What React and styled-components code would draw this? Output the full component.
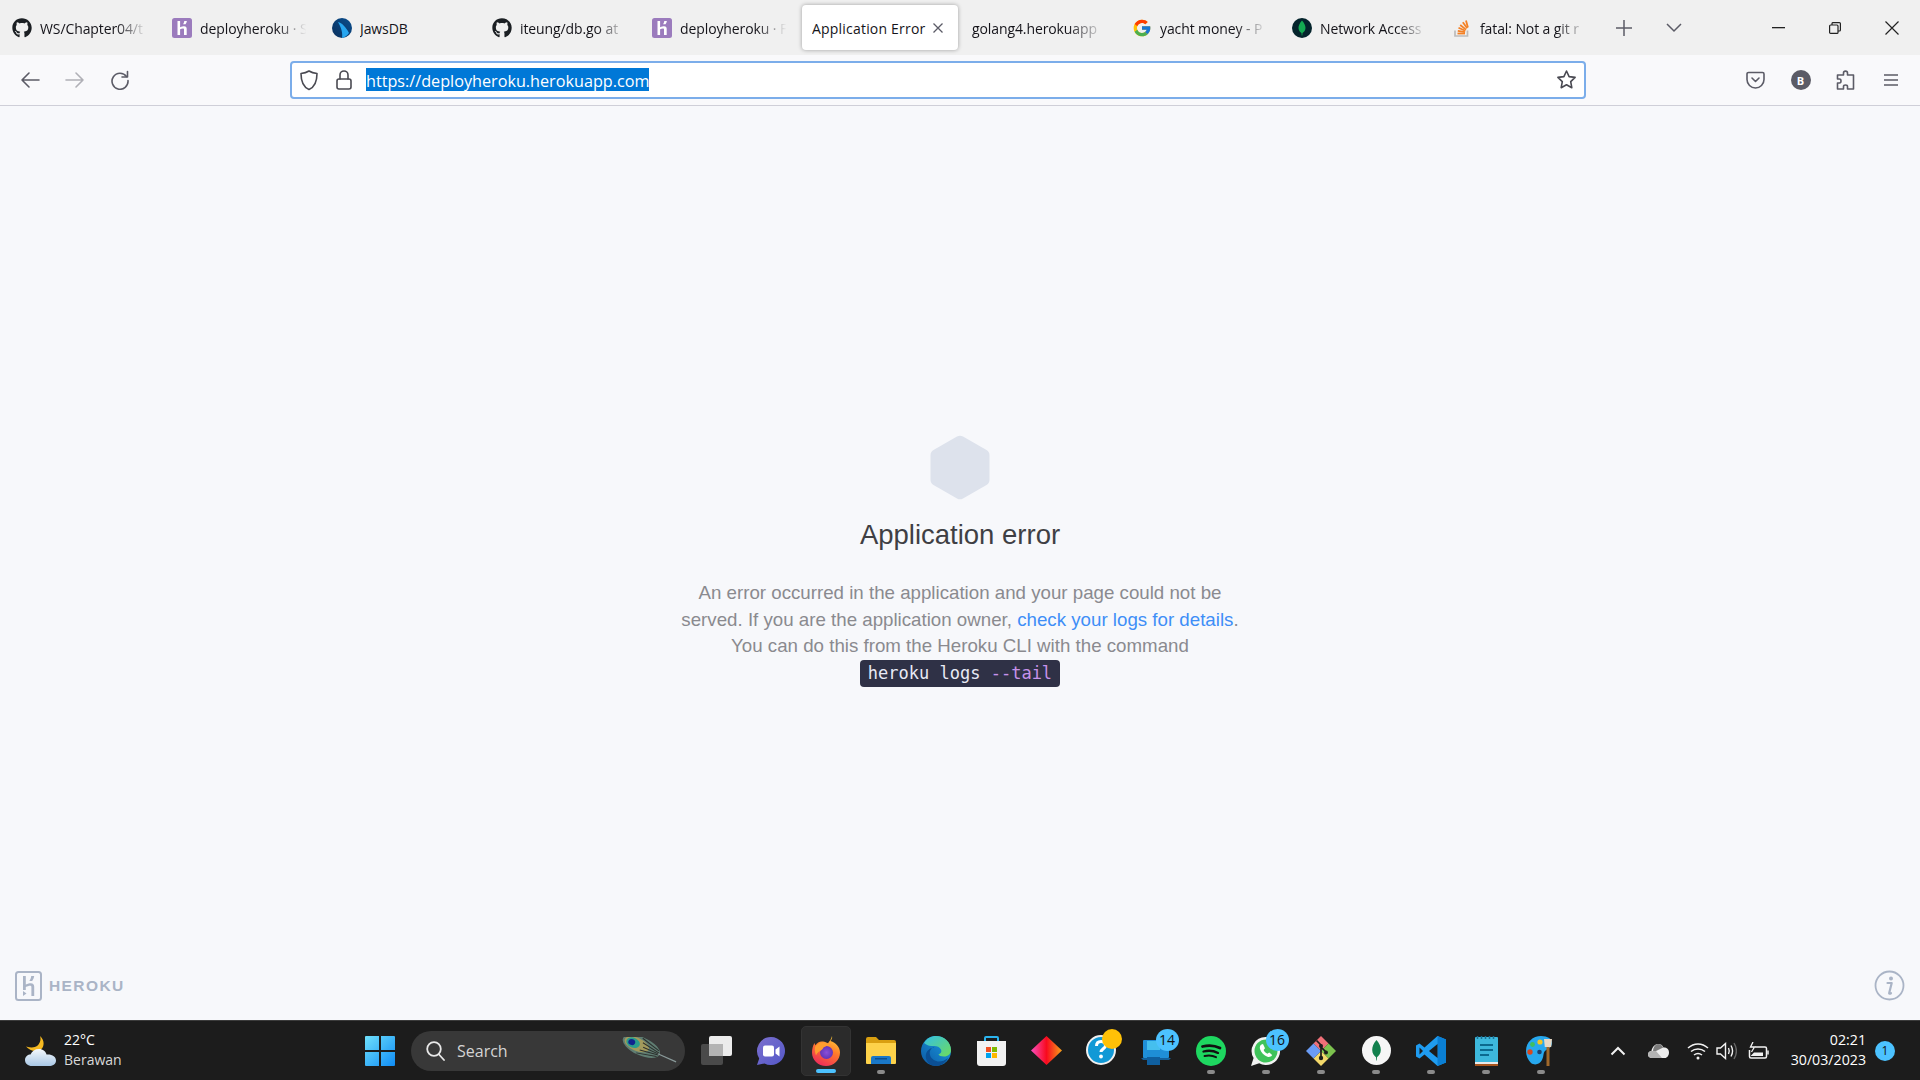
import React from 'react';
import styled, { createGlobalStyle } from 'styled-components';
import { FaGithub } from 'react-icons/fa';
import { FcGoogle } from 'react-icons/fc';

const GlobalStyle = createGlobalStyle`
  html, body {
    margin: 0;
    padding: 0;
    width: 1920px;
    height: 1080px;
    overflow: hidden;
    background: #f7f8fb;
  }
  * { box-sizing: border-box; }
`;

const Page = styled.div`
  display: flex;
  flex-direction: column;
  width: 1920px;
  height: 1080px;
  font-family: 'Open Sans', 'Noto Sans', sans-serif;
`;

/* ---------- tab strip ---------- */

const TabStrip = styled.div`
  display: flex;
  align-items: stretch;
  height: 55px;
  background: #f0f0f0;
  flex-shrink: 0;
`;

const Tab = styled.div`
  display: flex;
  align-items: center;
  gap: ${({ $active }) => ($active ? '6px' : '8px')};
  width: 156px;
  margin: 5px 2px;
  padding: 1px ${({ $active }) => ($active ? '14px' : '6px')} 0 10px;
  border-radius: 4px;
  background: ${({ $active }) => ($active ? '#fff' : 'transparent')};
  box-shadow: ${({ $active }) => ($active ? '0 0 4px rgba(0,0,0,.35)' : 'none')};
  color: #15141a;
  font-size: 14px;
  white-space: nowrap;
  svg { flex-shrink: 0; }
`;

const TabTitle = styled.span`
  flex: 1;
  min-width: 0;
  overflow: hidden;
  letter-spacing: ${({ $active }) => ($active ? '0.2px' : '-0.1px')};
  mask-image: ${({ $fade }) => ($fade ? 'linear-gradient(to right, #000 68%, transparent 95%)' : 'none')};
`;

const StripButton = styled.div`
  display: flex;
  align-items: center;
  justify-content: center;
  width: ${({ $w }) => $w}px;
  color: #5b5b66;
`;

const WindowControls = styled.div`
  display: flex;
  margin-left: auto;
`;

const WindowButton = styled.div`
  display: flex;
  align-items: center;
  justify-content: center;
  width: 56.5px;
  height: 55px;
  color: #222;
`;

/* ---------- toolbar ---------- */

const Toolbar = styled.div`
  display: flex;
  align-items: center;
  height: 51px;
  padding-left: 7px;
  background: #f9f9fb;
  border-bottom: 1px solid #cfcfd8;
  flex-shrink: 0;
`;

const NavButton = styled.div`
  display: flex;
  align-items: center;
  justify-content: center;
  width: 45px;
  height: 36px;
  flex-shrink: 0;
  color: ${({ $dim }) => ($dim ? '#b0b0b6' : '#5b5b66')};
  margin-left: ${({ $gap }) => $gap || 0}px;
`;

const UrlBar = styled.div`
  display: flex;
  align-items: center;
  width: 1296px;
  height: 38px;
  flex-shrink: 0;
  margin-left: 148px;
  margin-top: -1px;
  padding: 0 7px 0 5px;
  background: #fff;
  border: 2px solid #7badea;
  border-radius: 4px;
  color: #4a4a52;
`;

const UrlIcon = styled.div`
  display: flex;
  align-items: center;
  justify-content: center;
  width: ${({ $w }) => $w}px;
`;

const UrlText = styled.span`
  display: inline-block;
  height: 23px;
  background: #0078d7;
  color: #fff;
  font-size: 16.2px;
  line-height: 26px;
  white-space: nowrap;
`;

const UrlSpacer = styled.div`
  flex: 1;
`;

const ProfileBadge = styled.div`
  display: flex;
  align-items: center;
  justify-content: center;
  width: 20px;
  height: 20px;
  border-radius: 50%;
  background: #5b5b66;
  color: #fff;
  font-size: 11px;
  font-weight: 700;
`;

/* ---------- page content ---------- */

const Main = styled.main`
  flex: 1;
  display: flex;
  flex-direction: column;
  align-items: center;
  padding: 329px 15px 19px;
  background: #f7f8fb;
  font-family: 'Liberation Sans', Arial, sans-serif;
`;

const Heading = styled.h1`
  margin: 17px 0 0;
  color: #3f3f44;
  font-size: 27.5px;
  font-weight: 400;
  line-height: 36px;
`;

const Message = styled.p`
  margin: 27px 0 0;
  color: #8a8a8f;
  font-size: 18.72px;
  line-height: 26.5px;
  text-align: center;
`;

const DocLink = styled.a`
  color: #3e8ef7;
  text-decoration: none;
`;

const Command = styled.code`
  display: inline-block;
  height: 27px;
  padding: 0 7.500px;
  border-radius: 4px;
  background: #2f3146;
  color: #e8eaf5;
  font-family: 'DejaVu Sans Mono', 'Liberation Mono', monospace;
  font-size: 17px;
  line-height: 26px;
  vertical-align: top;
`;

const CommandFlag = styled.span`
  color: #c792ea;
`;

const PageFooter = styled.div`
  display: flex;
  align-items: center;
  justify-content: space-between;
  width: 100%;
  margin-top: auto;
`;

const Brand = styled.div`
  display: flex;
  align-items: center;
  gap: 7px;
`;

const BrandName = styled.span`
  color: #aab4c6;
  font-size: 15.5px;
  font-weight: 700;
  letter-spacing: 1.4px;
`;

/* ---------- taskbar ---------- */

const Taskbar = styled.div`
  display: flex;
  align-items: center;
  height: 60px;
  background: #1c1c1c;
  border-top: 1px solid #3b3b3b;
  color: #fff;
  flex-shrink: 0;
`;

const Weather = styled.div`
  display: flex;
  align-items: center;
  gap: 8px;
  width: 352px;
  padding-left: 25px;
`;

const WeatherText = styled.div`
  display: flex;
  flex-direction: column;
  margin-top: -2px;
  font-size: 14px;
  line-height: 20px;
`;

const WeatherSub = styled.span`
  color: #d8d8d8;
`;

const TaskSlot = styled.div`
  position: relative;
  display: flex;
  align-items: center;
  justify-content: center;
  width: ${({ $active }) => ($active ? '50px' : '55px')};
  height: 50px;
  margin: 0 ${({ $active }) => ($active ? '2.5px' : '0')};
  border-radius: 5px;
  border: ${({ $active }) => ($active ? '1px solid #333' : '0')};
  background: ${({ $active }) => ($active ? '#2b2b2b' : 'transparent')};
`;

const Indicator = styled.span`
  position: absolute;
  left: 50%;
  bottom: 1.5px;
  width: ${({ $active }) => ($active ? '20px' : '8px')};
  height: 4px;
  border-radius: 2px;
  background: ${({ $active }) => ($active ? '#4cc2ff' : '#8a8a8a')};
  transform: translateX(-50%);
`;

const CountBadge = styled.span`
  position: absolute;
  top: 3px;
  right: 5px;
  display: flex;
  align-items: center;
  justify-content: center;
  width: 23px;
  height: 22px;
  border-radius: 50%;
  background: #4cc2ff;
  color: #111;
  font-size: 14px;
`;

const SearchBox = styled.div`
  display: flex;
  align-items: center;
  width: 274px;
  height: 40px;
  margin: 0 3.5px 0 4px;
  padding: 0 8px 0 15px;
  border-radius: 20px;
  background: #383838;
`;

const SearchLabel = styled.span`
  flex: 1;
  margin-left: 12px;
  color: #d4d4d4;
  font-size: 16px;
`;

const Tray = styled.div`
  display: flex;
  align-items: center;
  width: 322px;
  margin-left: auto;
  padding-right: 25px;
`;

const TrayIcon = styled.div`
  display: flex;
  align-items: center;
  justify-content: center;
  width: ${({ $w }) => $w}px;
  margin-left: ${({ $gap }) => $gap || 0}px;
`;

const Clock = styled.div`
  flex: 1;
  margin-top: -2px;
  font-size: 14.2px;
  line-height: 20px;
  text-align: right;
`;

const NotifyBadge = styled.div`
  display: flex;
  align-items: center;
  justify-content: center;
  width: 20px;
  height: 20px;
  margin-left: 9px;
  border-radius: 50%;
  background: #4cc2ff;
  color: #111;
  font-size: 12px;
`;

/* ---------- icons ---------- */

const stroke = { fill: 'none', stroke: 'currentColor', strokeWidth: 1.6, strokeLinecap: 'round', strokeLinejoin: 'round' };

const HerokuFavicon = () => (
  <svg width="20" height="20" viewBox="0 0 20 20">
    <rect width="20" height="20" rx="2.5" fill="#9b7bbd" />
    <path d="M5.500 3h2.600v6.200c1.600-.7 3-1 4-1 2 0 2.600 1.300 2.600 2.600V17H12v-5.600c0-.8-.4-1-1-1-1 0-2 .3-2.900.8V17H5.500z" fill="#fff" />
    <path d="M12.300 3h2.600c-.2 1.200-.7 2.200-1.400 3.200h-2.400c.6-1 1-2.100 1.200-3.200z" fill="#fff" />
  </svg>
);

const JawsIcon = () => (
  <svg width="20" height="20" viewBox="0 0 20 20">
    <defs>
      <linearGradient id="jaws" x1="0" y1="1" x2="1" y2="0">
        <stop offset="0" stopColor="#0a2f5c" />
        <stop offset="1" stopColor="#0a4f8f" />
      </linearGradient>
    </defs>
    <circle cx="10" cy="10" r="10" fill="url(#jaws)" />
    <path d="M6 4c4 1 8 5 11 11-2 3-5 4.500-7 5 1-5-1-11-4-16z" fill="#27a6f0" />
  </svg>
);

const MongoFavicon = () => (
  <svg width="20" height="20" viewBox="0 0 20 20">
    <circle cx="10" cy="10" r="10" fill="#04242c" />
    <path d="M10 2.500c2.500 3 3.500 5 3.500 7.500 0 2.500-1.800 4.200-3 5l-.2 2.500h-.6L9.500 15c-1.200-.8-3-2.500-3-5 0-2.500 1-4.500 3.500-7.500z" fill="#13aa52" />
  </svg>
);

const StackIcon = () => (
  <svg width="20" height="20" viewBox="0 0 20 20">
    <path d="M3 12.500v5.500h12.500v-5.500" fill="none" stroke="#bcbbbb" strokeWidth="1.700" />
    <g stroke="#f48024" strokeWidth="1.800" fill="none">
      <path d="M5.500 15.500h7.500" />
      <path d="M5.800 12.800l7.300 1.300" />
      <path d="M6.500 9.800l6.800 3" />
      <path d="M8.200 7l5.800 4.600" />
      <path d="M10.800 4.200l4.400 6" />
      <path d="M14 2.500l1.900 7" />
    </g>
  </svg>
);

const ShieldIcon = () => (
  <svg width="20" height="22" viewBox="0 0 20 22" {...stroke}>
    <path d="M10 2c2.500 1.700 5 2.300 8 2.500 0 8-2 13.500-8 16-6-2.500-8-8-8-16 3-.2 5.500-.8 8-2.500z" />
  </svg>
);

const LockIcon = () => (
  <svg width="18" height="22" viewBox="0 0 18 22" {...stroke}>
    <rect x="2" y="10" width="14" height="10" rx="2" />
    <path d="M5 10V6a4 4 0 0 1 8 0v4" />
  </svg>
);

const StarIcon = () => (
  <svg width="21" height="21" viewBox="0 0 21 21" {...stroke}>
    <path d="M10.500 2l2.600 5.600 6 .8-4.400 4.200 1.100 6.100-5.300-3-5.300 3 1.100-6.100L1.900 8.400l6-.8z" />
  </svg>
);

const BackIcon = ({ flip }) => (
  <svg width="20" height="18" viewBox="0 0 20 18" {...stroke} style={flip ? { transform: 'scaleX(-1)' } : undefined}>
    <path d="M19 9H2M9 2L2 9l7 7" />
  </svg>
);

const ReloadIcon = () => (
  <svg width="20" height="20" viewBox="0 0 20 20" {...stroke}>
    <path d="M16.500 6.500A8 8 0 1 0 18 10.500" />
    <path d="M17.500 1.500v5.500h-5.500" />
  </svg>
);

const PocketIcon = () => (
  <svg width="19" height="18" viewBox="0 0 19 18" {...stroke}>
    <path d="M2.500 1.500h14a1.500 1.500 0 0 1 1.500 1.500v5.500a8.500 8.500 0 0 1-17 0V3a1.500 1.500 0 0 1 1.500-1.500z" />
    <path d="M6 7l3.500 3.500L13 7" />
  </svg>
);

const PuzzleIcon = () => (
  <svg width="19" height="20" viewBox="0 0 19 20" {...stroke}>
    <path d="M17.500 19h-6v-2.500c0-2-4-2-4 0V19H1.500v-6h2c2 0 2-4 0-4h-2V5h6V3c0-2.500 4-2.500 4 0v2h6z" />
  </svg>
);

const MenuIcon = () => (
  <svg width="16" height="14" viewBox="0 0 16 14" fill="none" stroke="currentColor" strokeWidth="1.600">
    <path d="M1 2h14M1 7h14M1 12h14" />
  </svg>
);

const HexagonIcon = () => (
  <svg width="62" height="65" viewBox="0 0 62 65">
    <path d="M28 1.500a6 6 0 0 1 6 0l23.500 13.500a6 6 0 0 1 3 5.200v24.600a6 6 0 0 1-3 5.200L34 63.500a6 6 0 0 1-6 0L4.500 50a6 6 0 0 1-3-5.200V20.200a6 6 0 0 1 3-5.200z" fill="#dde2ec" />
  </svg>
);

const HerokuLogo = () => (
  <svg width="27" height="30" viewBox="0 0 27 30">
    <rect x="1" y="1" width="25" height="28" rx="2.500" fill="none" stroke="#aab4c6" strokeWidth="2" />
    <path d="M8 5h2.800v8.500c2-.8 3.800-1.300 5-1.300 2.400 0 3.400 1.400 3.400 3.300V25h-2.800v-9c0-.8-.4-1.200-1.300-1.200-1.300 0-2.800.6-4.300 1.300V19H8z" fill="#aab4c6" />
    <path d="M16.200 5h3c-.3 2-1 3.500-2 5h-2.800c1-1.500 1.600-3 1.800-5z" fill="#aab4c6" />
    <path d="M8 20l3.500 2.500L8 25z" fill="#aab4c6" />
  </svg>
);

const InfoIcon = () => (
  <svg width="31" height="31" viewBox="0 0 31 31">
    <circle cx="15.500" cy="15.500" r="14" fill="none" stroke="#aab4c6" strokeWidth="1.800" />
    <circle cx="17" cy="8.500" r="2" fill="#aab4c6" />
    <path d="M13.500 13h4.200l-2.500 10c-.2.800.5 1 1.800.2" fill="none" stroke="#aab4c6" strokeWidth="2.200" strokeLinecap="round" strokeLinejoin="round" />
  </svg>
);

const WeatherIcon = () => (
  <svg width="31" height="30" viewBox="0 0 31 30">
    <defs>
      <linearGradient id="cloud" x1="0" y1="0" x2="0" y2="1">
        <stop offset="0" stopColor="#f4f8fc" />
        <stop offset="1" stopColor="#a9c8e6" />
      </linearGradient>
    </defs>
    <path d="M15 0c1.500 4-.5 8-3 10-2 1.600-6 2-11 .5C4 14 9 16 14 14.500 20 12.500 20 4 15 0z" fill="#f5b921" />
    <path d="M7 30c-4 0-7-2.500-7-6 0-3.500 3-5.500 5.500-5.500C7 15 10 13 14 13c4 0 7 2.500 7.500 5.500C27 18 31 20.500 31 24.500S27.500 30 24 30z" fill="url(#cloud)" />
  </svg>
);

const StartIcon = () => (
  <svg width="30" height="30" viewBox="0 0 30 30">
    <defs>
      <linearGradient id="win" x1="0" y1="0" x2="1" y2="1">
        <stop offset="0" stopColor="#6fe0fb" />
        <stop offset="1" stopColor="#0f8cf5" />
      </linearGradient>
    </defs>
    <path d="M0 1a1 1 0 0 1 1-1h13v14H0zM16 0h13a1 1 0 0 1 1 1v13H16zM0 16h14v14H1a1 1 0 0 1-1-1zM16 16h14v13a1 1 0 0 1-1 1H16z" fill="url(#win)" />
  </svg>
);

const SearchGlyph = () => (
  <svg width="19" height="20" viewBox="0 0 19 20" fill="none" stroke="#e8e8e8" strokeWidth="1.800" strokeLinecap="round">
    <circle cx="8" cy="8" r="6.800" />
    <path d="M13 13.500l5 5.500" />
  </svg>
);

const FeatherIcon = () => (
  <svg width="56" height="28" viewBox="0 0 56 28">
    <g transform="rotate(24 24 11)">
      <ellipse cx="20" cy="11" rx="20" ry="9" fill="#5f7d72" />
      <ellipse cx="15" cy="11" rx="13" ry="6.500" fill="#a29a5c" />
      <ellipse cx="11" cy="11" rx="7" ry="5" fill="#2a9d8c" />
      <ellipse cx="9.500" cy="11" rx="3.500" ry="3" fill="#10248f" />
      <g stroke="#2c2f2d" strokeWidth="1">
        <path d="M18 3l20 5M20 7l19 3M22 11h19M20 15l19-3M18 19l20-5" />
      </g>
      <path d="M38 11h20" stroke="#8a9a9a" strokeWidth="1.200" />
    </g>
  </svg>
);

const TaskViewIcon = () => (
  <svg width="31" height="29" viewBox="0 0 31 29">
    <rect x="0" y="8" width="22" height="21" rx="2" fill="#4a4a4a" />
    <rect x="8" y="0" width="23" height="20" rx="2" fill="#ececec" />
    <rect x="8" y="8" width="14" height="12" fill="#b4b4b4" />
  </svg>
);

const TeamsIcon = () => (
  <svg width="30" height="30" viewBox="0 0 30 30">
    <defs>
      <linearGradient id="teams" x1="0" y1="0" x2="1" y2="1">
        <stop offset="0" stopColor="#7b6fce" />
        <stop offset="1" stopColor="#5458c8" />
      </linearGradient>
    </defs>
    <path d="M15 1a14 14 0 1 1-6.500 26.400L1 29l2.200-6.600A14 14 0 0 1 15 1z" fill="url(#teams)" />
    <rect x="7" y="9.500" width="11" height="11" rx="2" fill="#fff" />
    <path d="M19.500 13.500l4-3v10l-4-3z" fill="#fff" />
  </svg>
);

const FirefoxIcon = () => (
  <svg width="30" height="30" viewBox="0 0 30 30">
    <defs>
      <linearGradient id="ffx" x1="0.800" y1="0" x2="0.300" y2="1">
        <stop offset="0" stopColor="#ffd43a" />
        <stop offset="0.450" stopColor="#ff7a2a" />
        <stop offset="1" stopColor="#ee2a5c" />
      </linearGradient>
      <radialGradient id="ffxc" cx="0.500" cy="0.500" r="0.600">
        <stop offset="0" stopColor="#8a4fd8" />
        <stop offset="1" stopColor="#5a30b0" />
      </radialGradient>
    </defs>
    <path d="M21 0c.5 2-.3 3.500-1.500 5C25 7 29 11 29 16.500 29 24 23 30 15 30S1 24 1 16.500c0-3 .7-6.500 2.500-9.500.2 1 .5 1.700 1 2.200C6 6.500 9 5 12 5.500c2 .3 3.500 1 5 1.800C18.500 5 20.500 3 21 0z" fill="url(#ffx)" />
    <circle cx="15.500" cy="16.500" r="6.500" fill="url(#ffxc)" />
    <path d="M4 11c2-4 8-6 12.500-3.500 2.500 1.400 3.500 3 3.500 3-3-1-6-.5-7.500 1-.5 2-3 3-5 4.500-1 .7-2 2-2.500 3.500-1-3-1.500-5.500-1-8.500z" fill="#ff9d2e" />
  </svg>
);

const FolderIcon = () => (
  <svg width="30" height="27" viewBox="0 0 30 27">
    <path d="M0 2a2 2 0 0 1 2-2h8l3 3h15a2 2 0 0 1 2 2v3H0z" fill="#d99f10" />
    <path d="M0 6h30v20a1 1 0 0 1-1 1H1a1 1 0 0 1-1-1z" fill="#fdd24a" />
    <path d="M5 27v-6a2 2 0 0 1 2-2h16a2 2 0 0 1 2 2v6z" fill="#1a78c8" />
    <rect x="9" y="21" width="12" height="1.500" fill="#0c4f8f" />
  </svg>
);

const EdgeIcon = () => (
  <svg width="30" height="30" viewBox="0 0 30 30">
    <defs>
      <linearGradient id="edgeA" x1="0" y1="1" x2="1" y2="0">
        <stop offset="0" stopColor="#0c59a4" />
        <stop offset="1" stopColor="#1b9de2" />
      </linearGradient>
      <linearGradient id="edgeB" x1="0" y1="0" x2="1" y2="1">
        <stop offset="0" stopColor="#33bfe6" />
        <stop offset="1" stopColor="#6fdc5a" />
      </linearGradient>
    </defs>
    <circle cx="15" cy="15" r="15" fill="url(#edgeA)" />
    <path d="M3 7C6 2 10 0 15 0c8 0 15 6 15 14 0 4-3 6.500-7 6.500-3 0-5-1-5.500-2 2.500-1 3.500-3 2.500-5-1.500-3-5-4-8.500-3.500C8 10.500 5 8.500 3 7z" fill="url(#edgeB)" />
    <path d="M13 11c-3 1-5 4-4 8 1 4 5.500 6.500 9 6.500 3 0 6-1 9-3.500-2 4-6 8-12 8-3 0-5-1-5-1-4-2-6-7-5-11 1-3.500 4-6 8-6.500z" fill="#0b4f94" />
  </svg>
);

const StoreIcon = () => (
  <svg width="29" height="30" viewBox="0 0 29 30">
    <path d="M8 6V2a1 1 0 0 1 1-1h11a1 1 0 0 1 1 1v4" fill="none" stroke="#2bb4ee" strokeWidth="2" />
    <path d="M0 5h29v22a3 3 0 0 1-3 3H3a3 3 0 0 1-3-3z" fill="#f2f2f2" />
    <rect x="9" y="11" width="5" height="5" fill="#f25022" />
    <rect x="15" y="11" width="5" height="5" fill="#7fba00" />
    <rect x="9" y="17" width="5" height="5" fill="#00a4ef" />
    <rect x="15" y="17" width="5" height="5" fill="#ffb900" />
  </svg>
);

const DiamondIcon = () => (
  <svg width="31" height="29" viewBox="0 0 31 29">
    <defs>
      <linearGradient id="dia" x1="0" y1="0" x2="1" y2="0">
        <stop offset="0" stopColor="#f94fc0" />
        <stop offset="0.500" stopColor="#f80a1e" />
        <stop offset="1" stopColor="#f7a21a" />
      </linearGradient>
    </defs>
    <path d="M15.500 0L31 14.500 15.500 29 0 14.500z" fill="url(#dia)" />
  </svg>
);

const HelpIcon = () => (
  <svg width="37" height="37" viewBox="0 0 37 37" style={{ marginTop: -6, marginLeft: 4 }}>
    <circle cx="16" cy="21" r="14" fill="#1199d6" stroke="#f0f0f0" strokeWidth="2" />
    <path d="M11.500 17c0-3 2-4.500 4.500-4.500s4.500 1.500 4.500 4c0 3-4.500 3.500-4.500 6.500" fill="none" stroke="#fff" strokeWidth="3" />
    <circle cx="16" cy="27.500" r="1.900" fill="#fff" />
    <circle cx="27" cy="10" r="10" fill="#ffc107" />
  </svg>
);

const ServerIcon = () => (
  <svg width="30" height="30" viewBox="0 0 30 30">
    <rect x="2" y="4" width="26" height="18" rx="1" fill="#1f8fd8" />
    <path d="M0 22h30l-2 2H2z" fill="#125f9a" />
    <path d="M6 5h13v9H6z" fill="#45bfee" />
    <path d="M6 14h13v7H6z" fill="#1e8ed6" />
    <path d="M6 21h13v8H6z" fill="#0f5f9f" />
  </svg>
);

const SpotifyIcon = () => (
  <svg width="30" height="30" viewBox="0 0 30 30">
    <circle cx="15" cy="15" r="15" fill="#1ed760" />
    <g fill="none" stroke="#111" strokeLinecap="round">
      <path d="M6.500 10.500c6-1.600 12-1.200 17.500 1.500" strokeWidth="2.800" />
      <path d="M7.500 15.500c5-1.300 10-.9 14.500 1.400" strokeWidth="2.300" />
      <path d="M8.500 20c4-.9 8-.7 11.500 1.200" strokeWidth="1.900" />
    </g>
  </svg>
);

const WhatsappIcon = () => (
  <svg width="30" height="30" viewBox="0 0 30 30">
    <path d="M15 1a14 14 0 1 1-6.800 26.200L0 30l2.600-7.900A14 14 0 0 1 15 1z" fill="#f2f2f2" />
    <circle cx="15" cy="15" r="11.500" fill="#3fc35a" />
    <path d="M10.500 8.500c-1.500 1-2 2.500-1.500 4.500 1 3.500 4 6.500 7.500 7.700 2 .5 3.700 0 4.700-1.700l-3-2.500-1.800 1.300c-1.700-.8-3-2.200-3.800-3.800l1.400-1.700-2-4.300z" fill="#fff" />
  </svg>
);

const GitToolIcon = () => (
  <svg width="30" height="30" viewBox="0 0 30 30">
    <path d="M15 0l7.500 7.500L15 15 7.500 7.500z" fill="#f07078" />
    <path d="M22.500 7.500L30 15l-7.500 7.500L15 15z" fill="#7cc24e" />
    <path d="M15 15l7.500 7.500L15 30l-7.500-7.500z" fill="#f3d86a" />
    <path d="M7.500 7.500L15 15l-7.500 7.500L0 15z" fill="#6a9cf5" />
    <g stroke="#1c1c1c" strokeWidth="1.700" fill="none">
      <path d="M10.500 4.500L15 9v13M15 11l5 5" />
    </g>
    <circle cx="15" cy="10" r="2" fill="#1c1c1c" />
    <circle cx="20" cy="16.500" r="2" fill="#1c1c1c" />
    <circle cx="15" cy="22" r="2.200" fill="#1c1c1c" />
  </svg>
);

const MongoAppIcon = () => (
  <svg width="29" height="29" viewBox="0 0 29 29">
    <circle cx="14.500" cy="14.500" r="14.500" fill="#f6f6f6" />
    <path d="M14.500 4c3 3.300 4.300 6.500 4.300 10 0 3.500-2.200 6-3.800 7.200l-.2 3.300h-.6l-.2-3.300c-1.600-1.200-3.800-3.700-3.800-7.200 0-3.500 1.300-6.700 4.300-10z" fill="#13814e" />
  </svg>
);

const VscodeIcon = () => (
  <svg width="30" height="30" viewBox="0 0 30 30">
    <path d="M21.500 0L30 3.500v23L21.500 30 8.500 18.500 3.500 22.500 0 20.500v-11l3.500-2 5 4z" fill="#1f9cf0" />
    <path d="M21.500 0L30 3.500v23L21.500 30z" fill="#0a7fd4" />
    <path d="M21.500 8l-8.500 7 8.500 7z" fill="#1c1c1c" />
    <path d="M3.500 11.500l3.500 3.500-3.500 3.500z" fill="#1c1c1c" />
  </svg>
);

const NotepadIcon = () => (
  <svg width="23" height="30" viewBox="0 0 23 30">
    <rect x="0" y="1" width="23" height="29" rx="1" fill="#3db8dc" />
    <rect x="0" y="26" width="23" height="2" fill="#e8e8e8" />
    <rect x="0" y="28" width="23" height="2" fill="#a8541c" />
    <path d="M2.500 3V0M6.500 3V0M10.500 3V0M14.500 3V0M18.500 3V0" stroke="#1a6f94" strokeWidth="1.500" />
    <path d="M5 9h13M5 14h13M5 19h9" stroke="#0c6a8f" strokeWidth="2.200" />
  </svg>
);

const PaintIcon = () => (
  <svg width="30" height="30" viewBox="0 0 30 30">
    <path d="M15 0c7 0 11 3 11 7 0 5-5 6-7 8-2 2-1 5-3 9-2 4-7 6-11 3C2 24 0 20 0 15 0 6 7 0 15 0z" fill="#27a8ee" />
    <circle cx="14" cy="6" r="2.600" fill="#f3c524" />
    <circle cx="6.500" cy="8.500" r="2.400" fill="#3fbf5f" />
    <circle cx="4" cy="16" r="2.700" fill="#d8481f" />
    <circle cx="13.500" cy="16" r="2.300" fill="#1c3f6e" />
    <rect x="20.500" y="11" width="3" height="19" fill="#a0682a" />
    <path d="M18 3h8l-.8 8h-6.400z" fill="#e8d9c5" />
  </svg>
);

const ChevronUpIcon = () => (
  <svg width="16" height="10" viewBox="0 0 16 10" fill="none" stroke="#f2f2f2" strokeWidth="2">
    <path d="M1.500 8.500L8 2l6.500 6.500" />
  </svg>
);

const CloudIcon = () => (
  <svg width="21" height="14" viewBox="0 0 21 14">
    <path d="M4 14c-2.500 0-4-1.500-4-3.500C0 8.500 1.600 7 3.400 7 4.200 3 7 0 10 0c2.500 0 4.500 1 5.500 3.500 3-.2 5.500 1.500 5.500 5 0 3-2 5.500-4 5.500z" fill="#eeeeee" />
    <path d="M10 0c2.200 0 4 1 5.200 3.500L8 7 5 7.500C5 4 7 0 10 0z" fill="#7c7c7c" />
    <path d="M0 10.500C0 8.500 1.600 7 3.400 7L8 7l6 7H4c-2.500 0-4-1.500-4-3.500z" fill="#b4b4b4" />
  </svg>
);

const WifiIcon = () => (
  <svg width="22" height="18" viewBox="0 0 22 18" fill="none" stroke="#f2f2f2" strokeWidth="1.500">
    <path d="M1 6c6-5.500 14-5.500 20 0" />
    <path d="M4 9.500c4-3.500 10-3.500 14 0" />
    <path d="M7 13c2.500-2 5.500-2 8 0" />
    <circle cx="11" cy="16" r="1.500" fill="#f2f2f2" stroke="none" />
  </svg>
);

const SpeakerIcon = () => (
  <svg width="21" height="18" viewBox="0 0 21 18" fill="none" stroke="#f2f2f2" strokeWidth="1.400">
    <path d="M1 6h3.500L9.500 1.500v15L4.500 12H1z" />
    <path d="M12.500 6c1 2 1 4 0 6" />
    <path d="M15 3.500c2 3.500 2 7.500 0 11" />
    <path d="M18 1c3 5 3 11 0 16" stroke="#666" />
  </svg>
);

const BatteryIcon = () => (
  <svg width="21" height="18" viewBox="0 0 21 18" fill="none" stroke="#f2f2f2" strokeWidth="1.500">
    <path d="M7 5h10a1.500 1.500 0 0 1 1.500 1.500v8A1.500 1.500 0 0 1 17 16H3a1.500 1.500 0 0 1-1.500-1.500V8" />
    <path d="M20 8.500v4" />
    <path d="M3 13.500l3-3h9v3.500H3z" fill="#f2f2f2" stroke="none" />
    <path d="M5 0L2.500 5h4L3.500 10" strokeWidth="1.300" />
  </svg>
);

/* ---------- data ---------- */

const tabs = [
  { title: 'WS/Chapter04/t', icon: <FaGithub size={20} color="#1b1f23" />, fade: true },
  { title: 'deployheroku · S', icon: <HerokuFavicon />, fade: true },
  { title: 'JawsDB', icon: <JawsIcon /> },
  { title: 'iteung/db.go at', icon: <FaGithub size={20} color="#1b1f23" />, fade: true },
  { title: 'deployheroku · F', icon: <HerokuFavicon />, fade: true },
  { title: 'Application Error', active: true },
  { title: 'golang4.herokuapp', fade: true },
  { title: 'yacht money - P', icon: <FcGoogle size={20} />, fade: true },
  { title: 'Network Access', icon: <MongoFavicon />, fade: true },
  { title: 'fatal: Not a git r', icon: <StackIcon />, fade: true },
];

const taskApps = [
  { key: 'taskview', icon: <TaskViewIcon /> },
  { key: 'teams', icon: <TeamsIcon /> },
  { key: 'firefox', icon: <FirefoxIcon />, active: true, open: true },
  { key: 'explorer', icon: <FolderIcon />, open: true },
  { key: 'edge', icon: <EdgeIcon /> },
  { key: 'store', icon: <StoreIcon /> },
  { key: 'diamond', icon: <DiamondIcon /> },
  { key: 'help', icon: <HelpIcon /> },
  { key: 'server', icon: <ServerIcon />, count: 14 },
  { key: 'spotify', icon: <SpotifyIcon />, open: true },
  { key: 'whatsapp', icon: <WhatsappIcon />, count: 16, open: true },
  { key: 'git', icon: <GitToolIcon />, open: true },
  { key: 'mongo', icon: <MongoAppIcon />, open: true },
  { key: 'vscode', icon: <VscodeIcon />, open: true },
  { key: 'notepad', icon: <NotepadIcon />, open: true },
  { key: 'paint', icon: <PaintIcon />, open: true },
];

export default function App() {
  return (
    <Page>
      <GlobalStyle />
      <TabStrip>
        {tabs.map((tab) => (
          <Tab key={tab.title} $active={tab.active}>
            {tab.icon}
            <TabTitle $fade={tab.fade} $active={tab.active}>{tab.title}</TabTitle>
            {tab.active && (
              <svg width="12" height="12" viewBox="0 0 12 12" fill="none" stroke="#5b5b66" strokeWidth="1.300">
                <path d="M1.500 1.500l9 9M10.500 1.500l-9 9" />
              </svg>
            )}
          </Tab>
        ))}
        <StripButton $w={48}>
          <svg width="16" height="16" viewBox="0 0 16 16" fill="none" stroke="currentColor" strokeWidth="1.500">
            <path d="M8 0v16M0 8h16" />
          </svg>
        </StripButton>
        <StripButton $w={52}>
          <svg width="16" height="10" viewBox="0 0 16 10" fill="none" stroke="currentColor" strokeWidth="1.500">
            <path d="M1 1l7 7 7-7" />
          </svg>
        </StripButton>
        <WindowControls>
          <WindowButton>
            <svg width="13" height="2" viewBox="0 0 13 2"><rect width="13" height="1.300" fill="currentColor" /></svg>
          </WindowButton>
          <WindowButton>
            <svg width="12" height="12" viewBox="0 0 12 12" fill="none" stroke="currentColor" strokeWidth="1.200">
              <rect x="0.600" y="3" width="8.400" height="8.400" rx="1" />
              <path d="M3 3V1.500A1 1 0 0 1 4 .6h6.400a1 1 0 0 1 1 1V8a1 1 0 0 1-1 1H9" />
            </svg>
          </WindowButton>
          <WindowButton>
            <svg width="14" height="14" viewBox="0 0 14 14" fill="none" stroke="currentColor" strokeWidth="1.200">
              <path d="M.5.500l13 13M13.500.500l-13 13" />
            </svg>
          </WindowButton>
        </WindowControls>
      </TabStrip>

      <Toolbar>
        <NavButton><BackIcon /></NavButton>
        <NavButton $dim><BackIcon flip /></NavButton>
        <NavButton><ReloadIcon /></NavButton>
        <UrlBar>
          <UrlIcon $w={24}><ShieldIcon /></UrlIcon>
          <UrlIcon $w={45}><LockIcon /></UrlIcon>
          <UrlText>https://deployheroku.herokuapp.com</UrlText>
          <UrlSpacer />
          <StarIcon />
        </UrlBar>
        <NavButton $gap={147}><PocketIcon /></NavButton>
        <NavButton><ProfileBadge>B</ProfileBadge></NavButton>
        <NavButton><PuzzleIcon /></NavButton>
        <NavButton><MenuIcon /></NavButton>
      </Toolbar>

      <Main>
        <HexagonIcon />
        <Heading>Application error</Heading>
        <Message>
          An error occurred in the application and your page could not be
          <br />
          served. If you are the application owner, <DocLink href="#">check your logs for details</DocLink>.
          <br />
          You can do this from the Heroku CLI with the command
          <br />
          <Command>heroku logs <CommandFlag>--tail</CommandFlag></Command>
        </Message>
        <PageFooter>
          <Brand>
            <HerokuLogo />
            <BrandName>HEROKU</BrandName>
          </Brand>
          <InfoIcon />
        </PageFooter>
      </Main>

      <Taskbar>
        <Weather>
          <WeatherIcon />
          <WeatherText>
            <span>22°C</span>
            <WeatherSub>Berawan</WeatherSub>
          </WeatherText>
        </Weather>
        <TaskSlot><StartIcon /></TaskSlot>
        <SearchBox>
          <SearchGlyph />
          <SearchLabel>Search</SearchLabel>
          <FeatherIcon />
        </SearchBox>
        {taskApps.map((app) => (
          <TaskSlot key={app.key} $active={app.active}>
            {app.icon}
            {app.count && <CountBadge>{app.count}</CountBadge>}
            {app.open && <Indicator $active={app.active} />}
          </TaskSlot>
        ))}
        <Tray>
          <TrayIcon $w={40}><ChevronUpIcon /></TrayIcon>
          <TrayIcon $w={40}><CloudIcon /></TrayIcon>
          <TrayIcon $w={28} $gap={6}><WifiIcon /></TrayIcon>
          <TrayIcon $w={28}><SpeakerIcon /></TrayIcon>
          <TrayIcon $w={28} $gap={4}><BatteryIcon /></TrayIcon>
          <Clock>
            <div>02:21</div>
            <div>30/03/2023</div>
          </Clock>
          <NotifyBadge>1</NotifyBadge>
        </Tray>
      </Taskbar>
    </Page>
  );
}
